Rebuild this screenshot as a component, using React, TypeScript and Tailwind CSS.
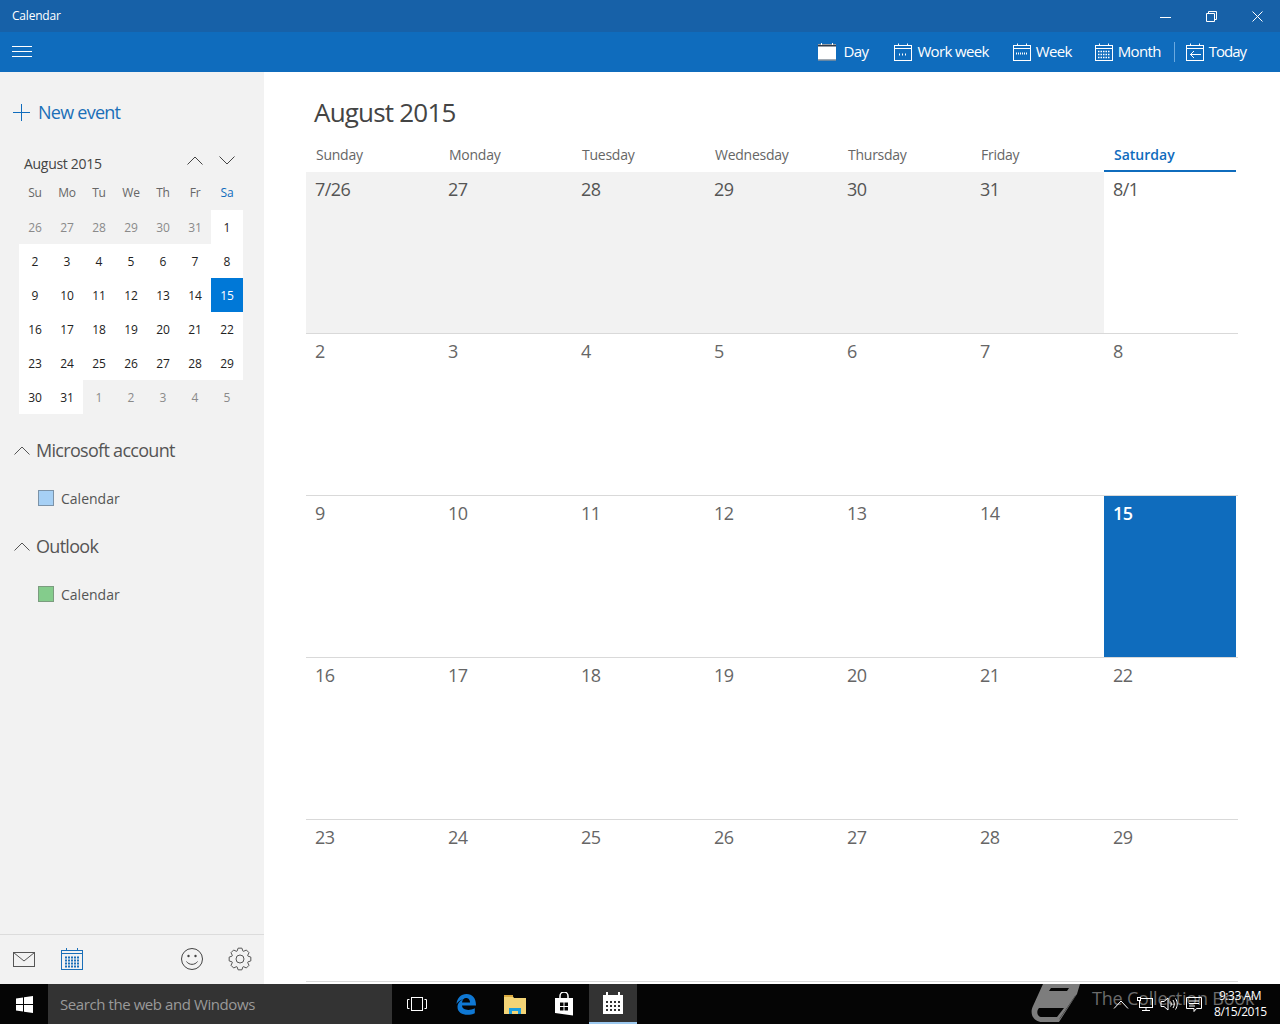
import React from "react";

function CalIcon({ kind }: { kind: "day" | "work" | "week" | "month" | "today" }) {
  if (kind === "day") {
    return (
      <svg width="18" height="18" viewBox="0 0 18 18" className="shrink-0">
        <rect x="0" y="1" width="18" height="16.5" fill="#fff" />
        <rect x="0" y="1.500" width="18" height="2" fill="#2f3b4a" />
        <rect x="3" y="0" width="1" height="2" fill="#fff" />
        <rect x="14" y="0" width="1" height="2" fill="#fff" />
        <rect x="0" y="16.500" width="18" height="1" fill="#47586b" />
      </svg>
    );
  }
  return (
    <svg width="18" height="18" viewBox="0 0 18 18" fill="none" stroke="#fff" strokeWidth="1" className="shrink-0">
      <rect x="0.5" y="2.5" width="17" height="15" />
      <path d="M0.5 5.5H17.5M4.5 0.5V2.5M13.5 0.5V2.5" />
      {kind === "work" && <path d="M5 11.5h2M8 11.5h2M11 11.5h2" strokeDasharray="1 1" strokeWidth="2" />}
      {kind === "week" && <path d="M3 10.5h12" strokeDasharray="1 1" strokeWidth="2" />}
      {kind === "month" && (
        <path d="M3 8.5h12M3 11.5h12M3 14.5h12" strokeDasharray="1.5 1" strokeWidth="1.6" />
      )}
      {kind === "today" && <path d="M15 11.5H4M8 8l-3.5 3.5L8 15" />}
    </svg>
  );
}

function ToolItem({ kind, label, gap, className, track }: { kind: "day" | "work" | "week" | "month" | "today"; label: string; gap: string; className: string; track: string }) {
  return (
    <div className={`flex items-center ${gap} ${className}`}>
      <CalIcon kind={kind} />
      <span className={`text-[15px] text-white -mt-[2px] ${track}`}>{label}</span>
    </div>
  );
}

function Chevron({ up, color = "#444" }: { up?: boolean; color?: string }) {
  return (
    <svg width="16" height="9" viewBox="0 0 16 9" fill="none" stroke={color} strokeWidth="1">
      <path d={up ? "M0.5 8.5L8 1l7.5 7.5" : "M0.5 0.5L8 8l7.5-7.5"} />
    </svg>
  );
}

function gearPath() {
  const pts: string[] = [];
  const teeth = 8;
  for (let i = 0; i < teeth; i++) {
    const a = (i / teeth) * Math.PI * 2 - Math.PI / 2;
    const w = Math.PI / 11;
    const list: [number, number][] = [
      [8.4, a - w * 1.25],
      [11, a - w * 0.6],
      [11, a + w * 0.6],
      [8.4, a + w * 1.25],
    ];
    list.forEach(([r, t]) => {
      pts.push(`${(12 + r * Math.cos(t)).toFixed(2)} ${(12 + r * Math.sin(t)).toFixed(2)}`);
    });
  }
  return "M" + pts.join("L") + "Z";
}

const miniHead = ["Su", "Mo", "Tu", "We", "Th", "Fr", "Sa"];
const miniDays: [string, boolean][] = [
  ...["26", "27", "28", "29", "30", "31"].map((d) => [d, false] as [string, boolean]),
  ...Array.from({ length: 31 }, (_, i) => [String(i + 1), true] as [string, boolean]),
  ...["1", "2", "3", "4", "5"].map((d) => [d, false] as [string, boolean]),
];

function MiniCalendar() {
  return (
    <div className="ml-[19px] w-[224px]">
      <div className="flex items-center justify-between h-[28px]">
        <span className="text-[14px] text-[#444] tracking-[-0.3px] ml-[5px] -mt-[4px]">August 2015</span>
        <div className="flex items-center gap-[16px] mr-[8px] -mt-[10px]">
          <Chevron up />
          <Chevron />
        </div>
      </div>
      <div className="grid grid-cols-[repeat(7,32px)] mt-[1px] h-[26px] items-center">
        {miniHead.map((h) => (
          <span key={h} className={`text-center text-[12px] tracking-[-0.2px] ${h === "Sa" ? "text-[#0f6cbd]" : "text-[#666]"}`}>
            {h}
          </span>
        ))}
      </div>
      <div className="grid grid-cols-[repeat(7,32px)] auto-rows-[34px] mt-[4px]">
        {miniDays.map(([d, cur], i) => {
          const sel = cur && d === "15";
          return (
            <div
              key={i}
              className={`flex items-center justify-center pt-[2px] text-[12px] ${
                sel ? "bg-[#0078d7] text-white" : cur ? "bg-white text-[#222]" : "text-[#8a8a8a]"
              }`}
            >
              {d}
            </div>
          );
        })}
      </div>
    </div>
  );
}

function Account({ name, color, border }: { name: string; color: string; border: string }) {
  return (
    <div>
      <div className="flex items-center h-[48px] pl-[14px]">
        <Chevron up color="#555" />
        <span className="ml-[6px] text-[18px] text-[#555] tracking-[-0.7px]">{name}</span>
      </div>
      <div className="flex items-center h-[48px] pl-[38px]">
        <span className={`w-[16px] h-[16px] border ${color} ${border}`} />
        <span className="ml-[7px] text-[14px] text-[#555] tracking-[0px]">Calendar</span>
      </div>
    </div>
  );
}

function Sidebar() {
  return (
    <aside className="w-[264px] shrink-0 bg-[#f2f2f2] flex flex-col">
      <div className="flex items-center pl-[13px] h-[36px] mt-[22px] mb-[21px]">
        <svg width="17" height="17" viewBox="0 0 17 17" stroke="#0f6cbd" strokeWidth="1" fill="none">
          <path d="M8.5 0V17M0 8.5H17" />
        </svg>
        <span className="ml-[8px] text-[18px] text-[#1a6fb8] tracking-[-0.75px]">New event</span>
      </div>
      <MiniCalendar />
      <div className="mt-[12px]">
        <Account name="Microsoft account" color="bg-[#a6d0f5]" border="border-[#7c93a8]" />
        <Account name="Outlook" color="bg-[#84cc8c]" border="border-[#7b9c7f]" />
      </div>
      <div className="mt-auto h-[50px] border-t border-[#dcdcdc] flex items-center relative">
        <svg width="24" height="17" viewBox="0 0 24 17" fill="none" stroke="#555" className="ml-[12px]">
          <rect x="1.5" y="1.5" width="21" height="14" />
          <path d="M1.5 1.5l10.500 8.500L22.500 1.500" />
        </svg>
        <svg width="24" height="24" viewBox="0 0 24 24" fill="none" stroke="#1a6fb8" className="ml-[24px] -mt-[2px]">
          <rect x="1.5" y="3.5" width="21" height="19" />
          <path d="M1.5 6.5h21M6.5 1v3M17.5 1v3" />
          <path d="M5 10.5h14M5 13.5h14M5 16.5h14M5 19.5h14" strokeDasharray="2 1" strokeWidth="2" />
        </svg>
        <svg width="24" height="24" viewBox="0 0 24 24" fill="none" stroke="#444" className="ml-[96px] -mt-[2px]">
          <circle cx="12" cy="12" r="10.5" />
          <circle cx="8.5" cy="9" r="1.2" fill="#444" stroke="none" />
          <circle cx="15.5" cy="9" r="1.2" fill="#444" stroke="none" />
          <path d="M6.5 14.5c2.5 3.8 8.5 3.8 11 0" />
        </svg>
        <svg width="24" height="24" viewBox="0 0 24 24" fill="none" stroke="#555" className="ml-[24px] -mt-[2px]">
          <path d={gearPath()} strokeLinejoin="round" />
          <circle cx="12" cy="12" r="4" />
        </svg>
      </div>
    </aside>
  );
}

const headers = ["Sunday", "Monday", "Tuesday", "Wednesday", "Thursday", "Friday", "Saturday"];
const weeks = [
  ["7/26", "27", "28", "29", "30", "31", "8/1"],
  ["2", "3", "4", "5", "6", "7", "8"],
  ["9", "10", "11", "12", "13", "14", "15"],
  ["16", "17", "18", "19", "20", "21", "22"],
  ["23", "24", "25", "26", "27", "28", "29"],
];

function MonthGrid() {
  return (
    <main className="flex-1 bg-white pl-[42px] pr-[42px] min-w-0">
      <h1 className="text-[26px] leading-[36px] text-[#444] ml-[8px] mt-[22px] tracking-[-0.8px] font-normal">August 2015</h1>
      <div className="grid grid-cols-[repeat(6,133px)_132px] mt-[6px] h-[36px] w-[930px]">
        {headers.map((h) => (
          <div
            key={h}
            className={`pl-[10px] pt-[4px] text-[14px] leading-[30px] ${
              h === "Saturday" ? "font-semibold text-[#0f6cbd] border-b-2 border-[#0f6cbd] tracking-[0px]" : "text-[#666] tracking-[-0.25px]"
            }`}
          >
            {h}
          </div>
        ))}
      </div>
      {weeks.map((w, wi) => (
        <div key={wi} className="grid grid-cols-[repeat(6,133px)_134px] h-[162px] border-b border-[#d9d9d9]">
          {w.map((d, di) => {
            const gray = wi === 0 && di < 6;
            const sel = wi === 2 && di === 6;
            return (
              <div
                key={di}
                className={`pl-[9px] pt-[4px] text-[18px] leading-[26px] tracking-[-0.6px] ${
                  sel ? "bg-[#0f6cbd] text-white font-semibold mr-[2px]" : gray ? "bg-[#f2f2f2] text-[#555]" : wi === 0 ? "text-[#555]" : "text-[#666]"
                }`}
              >
                {d}
              </div>
            );
          })}
        </div>
      ))}
    </main>
  );
}

function Taskbar() {
  return (
    <footer className="h-[40px] bg-[#050505] flex items-center relative shrink-0 overflow-hidden">
      <div className="w-[48px] flex justify-center">
        <svg width="17" height="17" viewBox="0 0 17 17" fill="#fff">
          <path d="M0 2.400L7 1.400V8H0zM8 1.200L17 0V8H8zM0 9h7v6.600L0 14.600zM8 9h9v8L8 15.800z" />
        </svg>
      </div>
      <div className="w-[344px] h-[40px] bg-[#333] flex items-center pl-[12px]">
        <span className="text-[15px] text-[#9a9a9a] tracking-[-0.42px]">Search the web and Windows</span>
      </div>
      <div className="flex items-center">
        <div className="w-[49px] h-[40px] flex items-center justify-center">
          <svg width="20" height="14" viewBox="0 0 20 14" fill="none" stroke="#fff">
            <rect x="4.500" y="0.500" width="11" height="13" />
            <path d="M2.500 2.500H0.500V11.500H2.500M17.500 2.500H19.500V11.500H17.500" />
          </svg>
        </div>
        <div className="w-[49px] h-[40px] flex items-center justify-center">
          <svg width="20" height="21" viewBox="0 0 20 21">
            <path d="M0.500 10C1 4 5 0 10.500 0 16.500 0 20 4 20 11.500H6c.3 4.500 7 5.800 12.800 2.700v5C12 22.500 1.500 21 1.500 13c0-3.500 2.500-6.500 6-8-2.500.5-5.500 2.500-7 5zM6 8.500h8C14 5.200 12 4 10 4 8 4 6.300 6 6 8.500z" fill="#0f78d4" />
          </svg>
        </div>
        <div className="w-[49px] h-[40px] flex items-center justify-center">
          <svg width="22" height="20" viewBox="0 0 22 20">
            <path d="M0 1h8l2 3h12v16H0z" fill="#f3d476" />
            <rect x="0" y="1" width="9" height="2" fill="#d9a93f" />
            <path d="M5 14h12v6h-3v-3H8v3H5z" fill="#1a9fe0" />
          </svg>
        </div>
        <div className="w-[49px] h-[40px] flex items-center justify-center">
          <svg width="20" height="24" viewBox="0 0 20 24">
            <path d="M6 6V4a4 4 0 0 1 8 0v2" fill="none" stroke="#fff" strokeWidth="1.500" />
            <path d="M1 6h18v17.500L1 21z" fill="#fff" />
            <path d="M6 10.500h3.500v3.500H6zM10.500 10.500H14v3.500h-3.500zM6 15h3.500v3.500H6zM10.500 15H14v3.500h-3.500z" fill="#050505" />
          </svg>
        </div>
        <div className="w-[48px] ml-[1px] h-[40px] bg-[#333] border-b-2 border-[#9cc8ee] flex items-center justify-center">
          <svg width="20" height="22" viewBox="0 0 20 22">
            <path d="M0 3h3V0h2v3h10V0h2v3h3v19H0z" fill="#fff" />
            <path d="M3 9h2v2H3zM7 9h2v2H7zM11 9h2v2h-2zM15 9h2v2h-2zM3 13h2v2H3zM7 13h2v2H7zM11 13h2v2h-2zM15 13h2v2h-2zM3 17h2v2H3zM7 17h2v2H7zM11 17h2v2h-2zM15 17h2v2h-2z" fill="#333" />
          </svg>
        </div>
      </div>
      <div className="absolute left-[1030px] top-0 flex items-start h-[40px]">
        <svg width="50" height="39" viewBox="0 0 50 39" fill="#7d7d7d">
          <path
            d="M13 0H50L47 10 29 38H12C4 38-1 30 3 22ZM21 4L19 7H37L39 4ZM9 24C6 27 7 33 12 33H27L34 24ZM45 12L30 34 29 36 46 11Z"
            fillRule="evenodd"
          />
        </svg>
        <span className="ml-[12px] mt-[2px] text-[18px] leading-[24px] text-[#6b6b6b] tracking-[-0.2px] whitespace-nowrap">The Collection Book</span>
      </div>
      <div className="absolute left-[1112px] top-0 h-[40px] flex items-center">
        <svg width="16" height="9" viewBox="0 0 16 9" fill="none" stroke="#fff" className="ml-[1px]">
          <path d="M1 8.500L8 1l7 7.500" />
        </svg>
        <svg width="16" height="14" viewBox="0 0 16 14" fill="none" stroke="#fff" className="ml-[8px]">
          <rect x="2.500" y="1.500" width="13" height="9" />
          <path d="M9 10.500V13.500M5 13.500H13" />
          <rect x="0.500" y="0.500" width="3" height="3" fill="#050505" />
        </svg>
        <svg width="18" height="14" viewBox="0 0 18 14" fill="none" stroke="#fff" className="ml-[7px]">
          <path d="M1 4.500h3L8 1v12L4 9.500H1zM10.500 4.500c1 1.500 1 3.500 0 5M13 3c1.700 2.500 1.700 5.500 0 8M15.500 1.500c2.300 3.500 2.300 7.500 0 11" />
        </svg>
        <svg width="16" height="15" viewBox="0 0 16 15" fill="none" stroke="#fff" className="ml-[8px]">
          <path d="M0.500 0.500H15.500V11.500H10.500L8 14.500V11.500H0.500zM3 4h10M3 6.500h10M3 9h6" />
        </svg>
      </div>
      <div className="absolute right-[14px] top-[4px] w-[52px] text-center text-white text-[12px] leading-[16px] tracking-[-0.45px]">
        <div>9:33 AM</div>
        <div>8/15/2015</div>
      </div>
    </footer>
  );
}

export default function App() {
  return (
    <div className="w-[1280px] h-[1024px] flex flex-col overflow-hidden bg-white">
      <div className="w-full h-full flex flex-col font-['Open_Sans','Noto_Sans',sans-serif]">
        <header className="h-[32px] bg-[#1761a8] flex items-center shrink-0">
          <span className="ml-[12px] text-[12px] text-white tracking-[-0.2px]">Calendar</span>
          <div className="ml-auto flex items-center h-full">
            <div className="w-[46px] flex justify-center">
              <svg width="11" height="11" viewBox="0 0 11 11" stroke="#fff"><path d="M0 6.500H11" /></svg>
            </div>
            <div className="w-[46px] flex justify-center">
              <svg width="11" height="11" viewBox="0 0 11 11" fill="none" stroke="#fff">
                <path d="M0.500 2.500h8v8h-8zM2.500 2.500v-2h8v8h-2" />
              </svg>
            </div>
            <div className="w-[46px] flex justify-center">
              <svg width="11" height="11" viewBox="0 0 11 11" stroke="#fff"><path d="M0.500 0.500l10 10M10.500 0.500l-10 10" /></svg>
            </div>
          </div>
        </header>
        <div className="h-[40px] bg-[#0f6cbd] flex items-center shrink-0">
          <svg width="20" height="12" viewBox="0 0 20 12" stroke="#fff" className="ml-[12px]">
            <path d="M0 0.500H20M0 5.500H20M0 10.500H20" />
          </svg>
          <div className="ml-auto flex items-center h-full pr-[34px]">
            <ToolItem kind="day" label="Day" gap="gap-[8px]" className="mr-[26px]" track="tracking-[-0.65px]" />
            <ToolItem kind="work" label="Work week" gap="gap-[5px]" className="mr-[24px]" track="tracking-[-0.65px]" />
            <ToolItem kind="week" label="Week" gap="gap-[5px]" className="mr-[23px]" track="tracking-[-0.65px]" />
            <ToolItem kind="month" label="Month" gap="gap-[5px]" className="mr-[13px]" track="tracking-[-0.65px]" />
            <span className="w-px h-[20px] bg-[#6aa9e0] mr-[11px]" />
            <ToolItem kind="today" label="Today" gap="gap-[5px]" className="" track="tracking-[-1px]" />
          </div>
        </div>
        <div className="flex-1 flex min-h-0">
          <Sidebar />
          <MonthGrid />
        </div>
        <Taskbar />
      </div>
    </div>
  );
}
